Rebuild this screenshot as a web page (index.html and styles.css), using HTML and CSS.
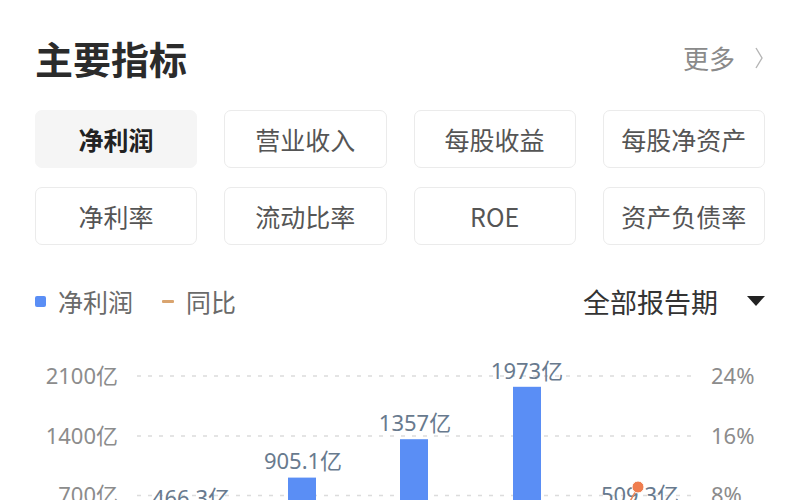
FILE: index.html
```html
<!DOCTYPE html>
<html lang="zh-CN">
<head>
<meta charset="utf-8">
<title>主要指标</title>
<link rel="stylesheet" href="styles.css">
</head>
<body>
<div class="page">
  <div class="header">
    <h1 class="title">主要指标</h1>
    <div class="more">更多
      <svg class="chev" width="8" height="22" viewBox="0 0 8 22"><polyline points="1,1 7,11 1,21" fill="none" stroke="#b5b5b5" stroke-width="1.4"/></svg>
    </div>
  </div>

  <div class="tabs">
    <div class="tab active">净利润</div>
    <div class="tab">营业收入</div>
    <div class="tab">每股收益</div>
    <div class="tab">每股净资产</div>
    <div class="tab">净利率</div>
    <div class="tab">流动比率</div>
    <div class="tab">ROE</div>
    <div class="tab">资产负债率</div>
  </div>

  <div class="legend-row">
    <div class="legend">
      <span class="sw-bar"></span><span class="lg-text">净利润</span>
      <span class="sw-line"></span><span class="lg-text">同比</span>
    </div>
    <div class="period">全部报告期<span class="tri"></span></div>
  </div>

  <div class="chart">
    <svg width="800" height="170" viewBox="0 0 800 170">
      <g stroke="#dcdcdc" stroke-width="1.5" stroke-dasharray="4 7">
        <line x1="137" y1="46" x2="692" y2="46"/>
        <line x1="137" y1="106" x2="692" y2="106"/>
        <line x1="137" y1="165.5" x2="692" y2="165.5"/>
      </g>
      <g class="axis" text-anchor="end">
        <text x="118" y="54">2100亿</text>
        <text x="118" y="114">1400亿</text>
        <text x="118" y="173">700亿</text>
      </g>
      <g class="axis" text-anchor="start">
        <text x="711" y="54">24%</text>
        <text x="711" y="114">16%</text>
        <text x="711" y="173">8%</text>
      </g>
      <g fill="#5a8ef5">
        <rect x="175" y="185" width="28" height="40"/>
        <rect x="288" y="147.6" width="28" height="77"/>
        <rect x="400" y="109.2" width="28" height="116"/>
        <rect x="513" y="56.8" width="28" height="168"/>
        <rect x="626" y="181" width="28" height="44"/>
      </g>
      <g class="val" text-anchor="middle">
        <text x="191" y="176">466.3亿</text>
        <text x="303" y="139">905.1亿</text>
        <text x="415" y="101">1357亿</text>
        <text x="527" y="49">1973亿</text>
        <text x="640" y="173">509.3亿</text>
      </g>
      <line x1="638" y1="157" x2="628" y2="175" stroke="#ef8656" stroke-width="1.5"/>
      <circle cx="638" cy="157" r="6" fill="#ef7d4e" stroke="#ffffff" stroke-width="1"/>
    </svg>
  </div>
</div>
</body>
</html>
```

FILE: styles.css
```css
* { box-sizing: border-box; }
html, body { margin: 0; padding: 0; background: #ffffff; }
body {
  font-family: "Noto Sans", "Noto Sans CJK SC", sans-serif;
  width: 800px;
  height: 500px;
  overflow: hidden;
}
.page {
  padding: 39px 35px 0 35px;
}
.header {
  display: flex;
  justify-content: space-between;
  align-items: center;
  height: 38px;
}
.title {
  margin: 0;
  font-family: "Noto Sans CJK SC", sans-serif;
  font-size: 38px;
  line-height: 38px;
  font-weight: 700;
  color: #2b2b2b;
}
.more {
  display: flex;
  align-items: center;
  gap: 20px;
  font-family: "Noto Sans CJK SC", sans-serif;
  font-size: 26px;
  line-height: 30px;
  color: #8a8a8a;
  padding-right: 2px;
}
.chev { display: block; }

.tabs {
  margin-top: 33px;
  display: grid;
  grid-template-columns: repeat(4, 1fr);
  column-gap: 27px;
  row-gap: 19px;
}
.tab {
  height: 58px;
  border: 1.5px solid #ebebeb;
  border-radius: 7px;
  display: flex;
  align-items: center;
  justify-content: center;
  font-family: "Noto Sans CJK SC", sans-serif;
  font-size: 25px;
  color: #555555;
}
.tab.active {
  background: #f5f5f5;
  border-color: #f5f5f5;
  color: #222222;
  font-weight: 700;
}

.legend-row {
  margin-top: 41px;
  height: 30px;
  display: flex;
  justify-content: space-between;
  align-items: center;
}
.legend {
  display: flex;
  align-items: center;
  font-family: "Noto Sans CJK SC", sans-serif;
  font-size: 25px;
  color: #6a6a6a;
}
.sw-bar {
  width: 11px;
  height: 11px;
  border-radius: 2px;
  background: #5a8ef5;
  margin-right: 12px;
}
.sw-line {
  width: 12px;
  height: 3px;
  border-radius: 1px;
  background: #d9a46f;
  margin-left: 29px;
  margin-right: 12px;
}
.period {
  display: flex;
  align-items: center;
  font-family: "Noto Sans CJK SC", sans-serif;
  font-size: 27px;
  color: #333333;
}
.tri {
  width: 0;
  height: 0;
  border-left: 9px solid transparent;
  border-right: 9px solid transparent;
  border-top: 10px solid #222222;
  margin-left: 29px;
}

.chart {
  margin: 14px -35px 0 -35px;
  height: 170px;
}
.chart svg { display: block; }
.axis {
  font-family: "Noto Sans", "Noto Sans CJK SC", sans-serif;
  font-size: 22px;
  fill: #8c8c8c;
}
.val {
  font-family: "Noto Sans", "Noto Sans CJK SC", sans-serif;
  font-size: 22px;
  fill: #687a8e;
}
```
